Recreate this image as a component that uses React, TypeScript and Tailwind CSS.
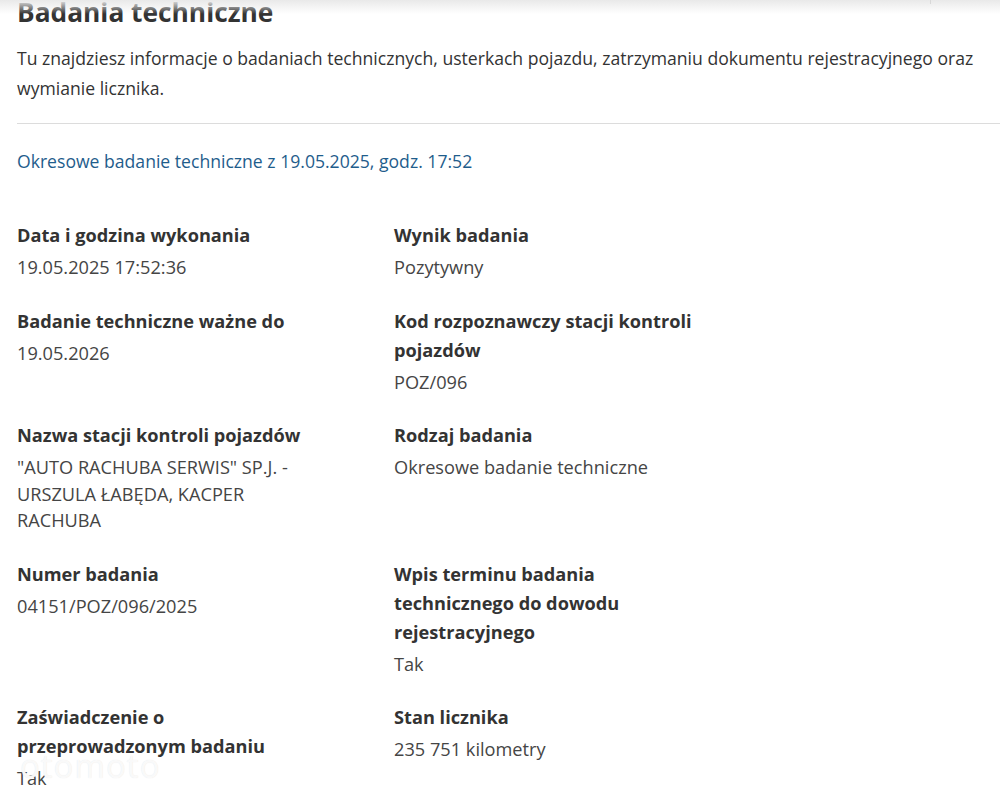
import React from 'react'

type Item = { label: string; value: string[] }

const rows: [Item, Item][] = [
  [
    { label: 'Data i godzina wykonania', value: ['19.05.2025 17:52:36'] },
    { label: 'Wynik badania', value: ['Pozytywny'] },
  ],
  [
    { label: 'Badanie techniczne ważne do', value: ['19.05.2026'] },
    { label: 'Kod rozpoznawczy stacji kontroli pojazdów', value: ['POZ/096'] },
  ],
  [
    {
      label: 'Nazwa stacji kontroli pojazdów',
      value: ['"AUTO RACHUBA SERWIS" SP.J. - URSZULA ŁABĘDA, KACPER RACHUBA'],
    },
    { label: 'Rodzaj badania', value: ['Okresowe badanie techniczne'] },
  ],
  [
    { label: 'Numer badania', value: ['04151/POZ/096/2025'] },
    {
      label: 'Wpis terminu badania technicznego do dowodu rejestracyjnego',
      value: ['Tak'],
    },
  ],
  [
    { label: 'Zaświadczenie o przeprowadzonym badaniu', value: ['Tak'] },
    { label: 'Stan licznika', value: ['235 751 kilometry'] },
  ],
]

function Field({ item }: { item: Item }) {
  return (
    <div className="w-[308px]">
      <div className="text-[18.2px] leading-[29px] font-bold text-[#333]">{item.label}</div>
      <div className="mt-[4px] text-[18.2px] leading-[26.5px] text-[#454545]">
        {item.value.map((v) => (
          <div key={v}>{v}</div>
        ))}
      </div>
    </div>
  )
}

export default function App() {
  return (
    <div
      className="relative min-h-screen overflow-hidden bg-white"
      style={{ fontFamily: '"Open Sans", "Noto Sans", Arial, sans-serif' }}
    >
      {/* header shadow above the section */}
      <div className="pointer-events-none absolute left-0 right-0 top-0 h-[14px] bg-gradient-to-b from-[#e9e9e9] to-transparent" />
      <div className="pointer-events-none absolute left-[930px] top-0 h-[4px] w-px bg-[#d8d8d8]" />

      <div className="pl-[17px]">
        <h1 className="-mt-[4px] text-[26.3px] leading-[32px] font-bold text-[#333]">
          Badania techniczne
        </h1>
        <p className="mt-[15px] text-[17.6px] leading-[30px] text-[#333]">
          Tu znajdziesz informacje o badaniach technicznych, usterkach pojazdu, zatrzymaniu dokumentu
          rejestracyjnego oraz wymianie licznika.
        </p>
        <div className="mt-[20px] h-px bg-[#dcdcdc]" />
        <div className="mt-[24px] text-[17.6px] leading-[26px] text-[#1f5d8c]">
          Okresowe badanie techniczne z 19.05.2025, godz. 17:52
        </div>

        <div className="mt-[47px] flex flex-col gap-[26px]">
          {rows.map(([a, b], i) => (
            <div key={i} className="flex gap-[69px]">
              <Field item={a} />
              <Field item={b} />
            </div>
          ))}
        </div>
      </div>

      {/* faint watermark and bottom edge */}
      <div className="pointer-events-none absolute left-[20px] top-[746px] text-[33px] leading-[40px] tracking-[1px] text-white/80 [text-shadow:0_0_1px_#e2e2e2]">
        otomoto
      </div>
      <div className="pointer-events-none absolute bottom-0 left-0 right-0 h-[3px] bg-[#f2f2f2]" />
    </div>
  )
}
